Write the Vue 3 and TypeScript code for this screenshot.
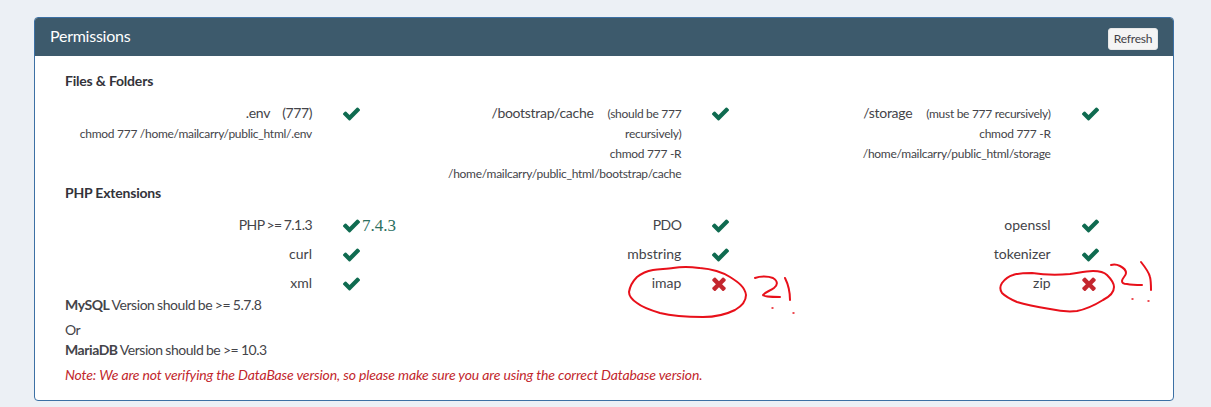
<template>
  <div class="page">
    <section class="card">
      <header class="card-head">
        <span class="card-title">Permissions</span>
        <button class="refresh">Refresh</button>
      </header>

      <div class="card-body">
        <h4 class="group-title first">Files &amp; Folders</h4>
        <div class="perm-grid">
          <div v-for="f in folders" :key="f.name" class="perm-item">
            <div class="perm-label">
              <div class="perm-main">
                <span class="path">{{ f.name }}</span>
                <span :class="f.noteSmall ? 'note-small' : 'note-plain'">{{ f.note }}</span>
              </div>
              <div v-for="line in f.lines" :key="line" class="perm-line">{{ line }}</div>
            </div>
            <svg class="ico-check" viewBox="121 294 1550 1228"><path :d="checkPath" /></svg>
          </div>
        </div>

        <h4 class="group-title">PHP Extensions</h4>
        <div class="ext-grid">
          <div v-for="e in extensions" :key="e.name" class="ext-item">
            <div class="perm-label ext-name" :class="{ tight: e.tight }">{{ e.name }}</div>
            <svg v-if="e.ok" class="ico-check" viewBox="121 294 1550 1228"><path :d="checkPath" /></svg>
            <svg v-else class="ico-times" viewBox="110 238 1188 1316"><path :d="timesPath" /></svg>
            <span v-if="e.version" class="version">{{ e.version }}</span>
          </div>
        </div>

        <p class="db-line mysql"><b>MySQL</b> Version should be &gt;= 5.7.8</p>
        <p class="db-line or">Or</p>
        <p class="db-line"><b>MariaDB</b> Version should be &gt;= 10.3</p>
        <p class="db-note">Note: We are not verifying the DataBase version, so please make sure you are using the correct Database version.</p>
      </div>
    </section>

    <!-- hand drawn red marks on top of the screenshot -->
    <svg class="scribble" viewBox="0 0 1211 407" fill="none">
      <path d="M673 268C685 266 692 267 700 268C712 269 722 272 730 277C738 282 745 287 746 295C746 302 742 306 735 310C725 315 714 317 703 317C688 317 672 316 660 313C650 310 642 307 637 303C631 299 629 296 629 292C630 286 633 281 637 277C642 273 647 271 653 270C660 269 667 269 673 268Z" />
      <path d="M755 278C760 276 768 276 773 278C778 281 778 285 774 288C770 291 765 292 763 295C764 297 772 297 780 297" />
      <path d="M785 278C788 284 790 292 790 300" />
      <path class="dot" d="M772 308h1M793 313h1" />
      <path d="M1032 273C1045 275 1058 275 1070 274C1078 273 1085 271 1093 271C1100 271 1104 272 1107 275C1111 279 1114 283 1114 287C1114 292 1109 297 1103 300C1095 305 1087 309 1077 311C1068 312 1059 311 1050 309C1038 307 1027 305 1017 302C1010 299 1005 296 1002 293C1000 290 1000 286 1002 283C1005 279 1009 276 1013 275C1019 273 1026 273 1032 273Z" />
      <path d="M1111 265C1115 264 1118 265 1120 266C1124 268 1126 270 1126 273C1126 276 1122 278 1122 281C1122 283 1124 284 1127 284C1132 285 1137 285 1142 285" />
      <path d="M1141 262C1145 267 1149 272 1150 277C1151 281 1151 286 1151 290" />
      <path class="dot" d="M1132 299h1M1148 301h1" />
    </svg>
  </div>
</template>

<script setup lang="ts">
interface Folder {
  name: string
  note: string
  noteSmall: boolean
  lines: string[]
}

interface Extension {
  name: string
  ok: boolean
  version?: string
  tight?: boolean
}

const checkPath =
  'M1671 566q0 40-28 68l-724 724-136 136q-28 28-68 28t-68-28l-136-136-362-362q-28-28-28-68t28-68l136-136q28-28 68-28t68 28l294 295 656-657q28-28 68-28t68 28l136 136q28 28 28 68z'
const timesPath =
  'M1298 1322q0 40-28 68l-136 136q-28 28-68 28t-68-28l-294-294-294 294q-28 28-68 28t-68-28l-136-136q-28-28-28-68t28-68l294-294-294-294q-28-28-28-68t28-68l136-136q28-28 68-28t68 28l294 294 294-294q28-28 68-28t68 28l136 136q28 28 28 68t-28 68l-294 294 294 294q28 28 28 68z'

const folders: Folder[] = [
  { name: '.env', note: '(777)', noteSmall: false, lines: ['chmod 777 /home/mailcarry/public_html/.env'] },
  {
    name: '/bootstrap/cache',
    note: '(should be 777',
    noteSmall: true,
    lines: ['recursively)', 'chmod 777 -R', '/home/mailcarry/public_html/bootstrap/cache']
  },
  {
    name: '/storage',
    note: '(must be 777 recursively)',
    noteSmall: true,
    lines: ['chmod 777 -R', '/home/mailcarry/public_html/storage']
  }
]

const extensions: Extension[] = [
  { name: 'PHP >= 7.1.3', ok: true, version: '7.4.3', tight: true },
  { name: 'PDO', ok: true, tight: true },
  { name: 'openssl', ok: true },
  { name: 'curl', ok: true },
  { name: 'mbstring', ok: true },
  { name: 'tokenizer', ok: true },
  { name: 'xml', ok: true },
  { name: 'imap', ok: false },
  { name: 'zip', ok: false }
]
</script>

<style>
html,
body {
  margin: 0;
  background: #ecf0f5;
}
</style>

<style scoped>
.page {
  position: relative;
  height: 407px;
  padding: 17px 37px 0 34px;
  box-sizing: border-box;
  overflow: hidden;
  font-family: "Lato", "Liberation Sans", sans-serif;
  font-size: 14px;
  line-height: 20px;
  color: #444449;
}

.card {
  height: 384px;
  box-sizing: border-box;
  background: #fff;
  border: 1px solid #3c70a4;
  border-radius: 4px;
}

.card-head {
  display: flex;
  align-items: flex-start;
  justify-content: space-between;
  height: 38px;
  padding: 0 15px;
  background: #3d5a6c;
  border-radius: 3px 3px 0 0;
}

.card-title {
  margin-top: 8px;
  color: #fff;
  font-size: 16px;
  letter-spacing: -0.25px;
}

.refresh {
  height: 22px;
  width: 50px;
  margin-top: 10px;
  padding: 0;
  font: inherit;
  font-size: 12px;
  letter-spacing: -0.2px;
  color: #3f3f46;
  background: #f4f4f4;
  border: 1px solid #e6e6e6;
  border-radius: 3px;
}

.card-body {
  padding: 15px 15px 0;
}

.group-title {
  margin: 0;
  padding-left: 15px;
  font-size: 14px;
  line-height: 20px;
  font-weight: 700;
  letter-spacing: -0.2px;
  color: #33333a;
}

.group-title.first {
  margin-bottom: 12px;
}

.perm-grid,
.ext-grid {
  display: grid;
  grid-template-columns: repeat(3, 1fr);
}

.perm-grid {
  height: 80px;
}

.ext-grid {
  margin-top: 12px;
  row-gap: 9px;
}

.perm-item,
.ext-item {
  display: flex;
  align-items: flex-start;
}

.perm-label {
  flex: 0 0 262px;
  width: 262px;
  margin-right: 31px;
  text-align: right;
}

.tight {
  letter-spacing: -0.55px;
  word-spacing: -0.8px;
}

.perm-main {
  height: 21px;
}

.path {
  letter-spacing: -0.3px;
}

.note-plain {
  margin-left: 12px;
  letter-spacing: -0.4px;
}

.note-small {
  margin-left: 14px;
  font-size: 12px;
  letter-spacing: -0.3px;
}

.perm-line {
  font-size: 12px;
  letter-spacing: -0.28px;
}

.ico-check {
  width: 17px;
  height: 13.5px;
  margin-top: 4px;
  fill: #0f6b50;
}

.ico-times {
  width: 14px;
  height: 15px;
  margin-top: 3px;
  fill: #c4262e;
}

.version {
  height: 20px;
  margin-left: 2px;
  font-family: "Liberation Serif", serif;
  font-size: 17px;
  line-height: 22px;
  color: #2b6f60;
}

.db-line {
  margin: 0;
  letter-spacing: -0.45px;
  word-spacing: -0.5px;
}

.db-line.mysql {
  margin-top: 2px;
  margin-bottom: 5px;
}

.db-line b {
  font-weight: 700;
}

.db-note {
  margin: 5px 0 0;
  font-size: 14px;
  font-style: italic;
  letter-spacing: -0.13px;
  color: #c2272d;
}

.db-line,
.db-note {
  padding-left: 15px;
}

.scribble {
  position: absolute;
  left: 0;
  top: 0;
  width: 1211px;
  height: 407px;
  pointer-events: none;
  stroke: #e8101a;
  stroke-width: 2;
  stroke-linecap: round;
  stroke-linejoin: round;
}

.scribble .dot {
  stroke-width: 1.4;
}
</style>
